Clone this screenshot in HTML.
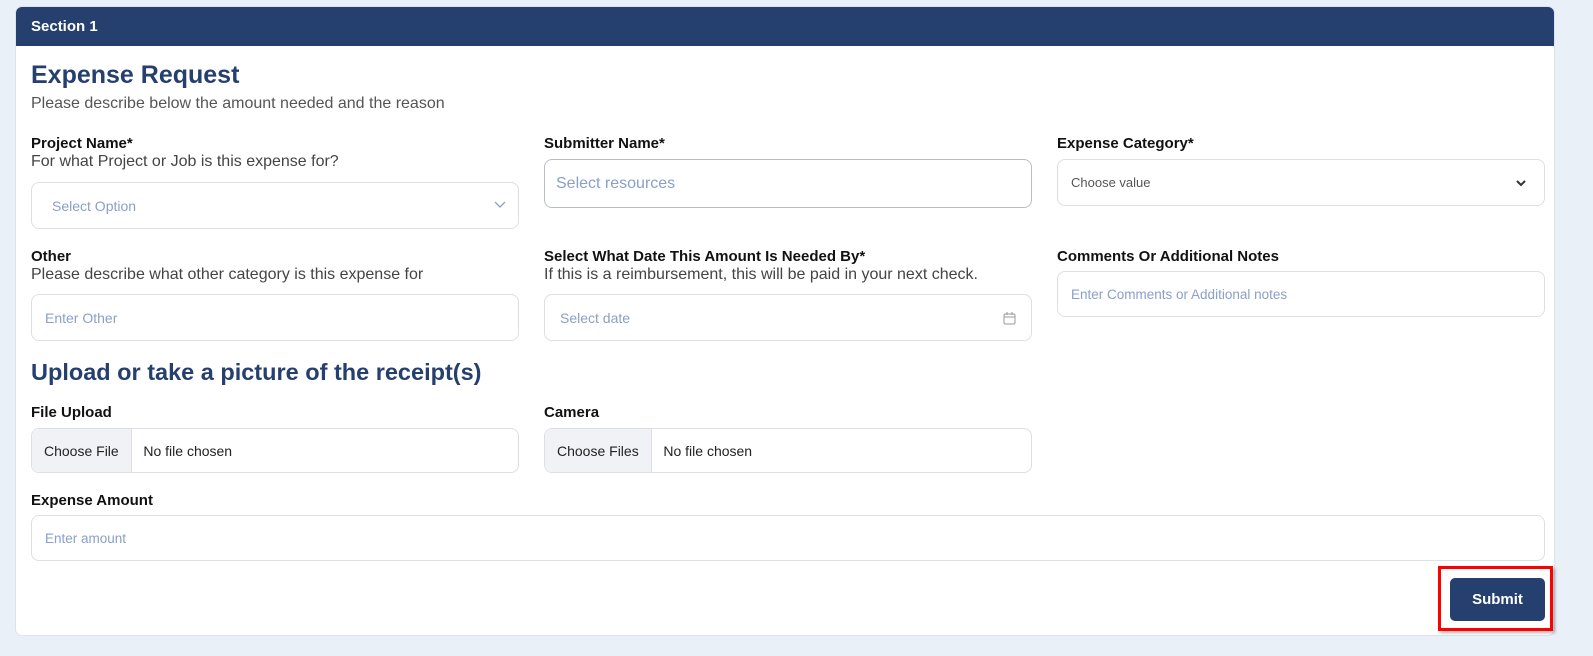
<!DOCTYPE html>
<html><head><style>
*{box-sizing:border-box;margin:0;padding:0}
body{width:1593px;height:656px;background:#eaf0f8;font-family:"Liberation Sans",sans-serif;position:relative;overflow:hidden}
.card{position:absolute;left:15px;top:6px;width:1540px;height:630px;background:#fff;border-radius:7px;border:1px solid #dde3ec;overflow:hidden}
.hdr{height:39px;background:#253f6e;color:#fff;font-weight:bold;font-size:15px;padding:11px 0 0 15px}
.a{position:absolute}
h1{position:absolute;left:31px;top:61px;font-size:25px;color:#253f6e;font-weight:bold}
.lbl{font-size:15px;font-weight:bold;color:#111}
.sub{font-size:16px;color:#444;margin-top:1px}
.in{position:absolute;border:1px solid #dcdfe4;border-radius:8px;background:#fff;color:#8aa0c8;font-size:14px;padding-left:13px;display:flex;align-items:center}
.file{color:#222}
.file span.b{background:#f0f2f5;height:100%;display:flex;align-items:center;padding:0 12px;border-right:1px solid #dcdfe4;margin-left:-13px;border-radius:8px 0 0 8px}
</style></head><body>
<div class="card" style="left:15px"><div class="hdr">Section 1</div></div>
<h1>Expense Request</h1>
<div class="a" style="left:31px;top:95px;font-size:16px;color:#555">Please describe below the amount needed and the reason</div>

<div class="a" style="left:31px;top:135px"><div class="lbl">Project Name*</div><div class="sub">For what Project or Job is this expense for?</div></div>
<div class="in" style="left:31px;top:182px;width:488px;height:47px;padding-left:20px">Select Option<svg class="a" style="right:12px;top:18px" width="12" height="8"><path d="M1 1l5 5 5-5" stroke="#8aa0c8" fill="none" stroke-width="1.3"/></svg></div>

<div class="a lbl" style="left:544px;top:135px">Submitter Name*</div>
<div class="in" style="left:544px;top:159px;width:488px;height:49px;border-color:#b8bcc4;font-size:16px;padding-left:11px">Select resources</div>

<div class="a lbl" style="left:1057px;top:135px">Expense Category*</div>
<div class="in" style="left:1057px;top:159px;width:488px;height:47px;color:#555;font-size:13px">Choose value<svg class="a" style="right:18px;top:20px" width="10" height="7"><path d="M1 1l4 4 4-4" stroke="#333" fill="none" stroke-width="2"/></svg></div>

<div class="a" style="left:31px;top:248px"><div class="lbl">Other</div><div class="sub">Please describe what other category is this expense for</div></div>
<div class="in" style="left:31px;top:294px;width:488px;height:47px">Enter Other</div>

<div class="a" style="left:544px;top:248px"><div class="lbl">Select What Date This Amount Is Needed By*</div><div class="sub">If this is a reimbursement, this will be paid in your next check.</div></div>
<div class="in" style="left:544px;top:294px;width:488px;height:47px;padding-left:15px">Select date<svg class="a" style="right:15px;top:17px" width="13" height="13"><rect x="1" y="2" width="11" height="10" rx="1.5" stroke="#999" fill="none"/><path d="M1 5h11M4 0v3M9 0v3" stroke="#999"/></svg></div>

<div class="a lbl" style="left:1057px;top:248px">Comments Or Additional Notes</div>
<div class="in" style="left:1057px;top:271px;width:488px;height:46px;font-size:13.5px">Enter Comments or Additional notes</div>

<div class="a" style="left:31px;top:359px;font-size:23.5px;font-weight:bold;color:#253f6e">Upload or take a picture of the receipt(s)</div>

<div class="a lbl" style="left:31px;top:404px">File Upload</div>
<div class="in file" style="left:31px;top:428px;width:488px;height:45px"><span class="b">Choose File</span>&nbsp;&nbsp;&nbsp;No file chosen</div>
<div class="a lbl" style="left:544px;top:404px">Camera</div>
<div class="in file" style="left:544px;top:428px;width:488px;height:45px"><span class="b">Choose Files</span>&nbsp;&nbsp;&nbsp;No file chosen</div>

<div class="a lbl" style="left:31px;top:492px">Expense Amount</div>
<div class="in" style="left:31px;top:515px;width:1514px;height:46px;font-size:13.5px">Enter amount</div>

<div class="a" style="left:1438px;top:566px;width:115px;height:65px;border:3px solid #f00;box-shadow:2px 2px 3px rgba(0,0,0,.3)"></div>
<div class="a" style="left:1450px;top:578px;width:95px;height:43px;background:#253f6e;border-radius:5px;color:#fff;font-weight:bold;font-size:15px;display:flex;align-items:center;justify-content:center">Submit</div>
</body></html>
